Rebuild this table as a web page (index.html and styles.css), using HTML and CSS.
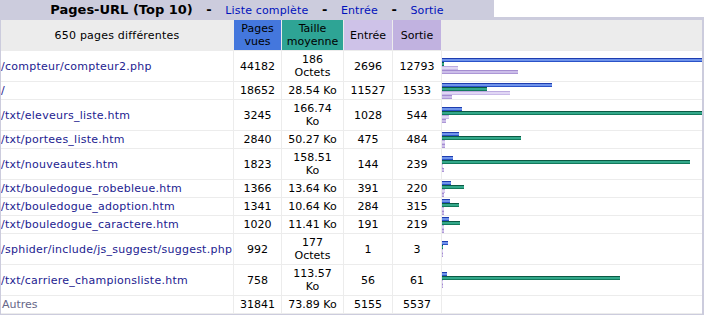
FILE: index.html
```html
<!DOCTYPE html>
<html lang="fr">
<head>
<meta charset="utf-8">
<title>Pages-URL (Top 10)</title>
<link rel="stylesheet" href="styles.css">
</head>
<body>
<div class="panel">
  <div class="titlebar">
    <div class="title">Pages-URL (Top 10) &nbsp; - &nbsp; <a href="#">Liste complète</a> &nbsp; - &nbsp; <a href="#">Entrée</a> &nbsp; - &nbsp; <a href="#">Sortie</a></div>
    <div class="blank"></div>
  </div>
  <div class="frame">
    <table class="data">
      <colgroup>
        <col class="c-url"><col class="c-pages"><col class="c-size"><col class="c-entry"><col class="c-exit"><col class="c-bar">
      </colgroup>
      <tr class="head">
        <th class="h-url">650 pages différentes</th>
        <th class="h-pages">Pages<br>vues</th>
        <th class="h-size">Taille<br>moyenne</th>
        <th class="h-entry">Entrée</th>
        <th class="h-exit">Sortie</th>
        <th class="h-bar"></th>
      </tr>
      <tr>
        <td class="url"><a href="#">/compteur/compteur2.php</a></td>
        <td>44182</td><td>186<br>Octets</td><td>2696</td><td>12793</td>
        <td class="bars"><span class="bar bp" style="width:260px"></span><span class="bar bk" style="width:2px"></span><span class="bar be" style="width:16px"></span><span class="bar bx" style="width:76px"></span></td>
      </tr>
      <tr>
        <td class="url"><a href="#">/</a></td>
        <td>18652</td><td>28.54 Ko</td><td>11527</td><td>1533</td>
        <td class="bars"><span class="bar bp" style="width:110px"></span><span class="bar bk" style="width:45px"></span><span class="bar be" style="width:68px"></span><span class="bar bx" style="width:10px"></span></td>
      </tr>
      <tr>
        <td class="url"><a href="#">/txt/eleveurs_liste.htm</a></td>
        <td>3245</td><td>166.74<br>Ko</td><td>1028</td><td>544</td>
        <td class="bars"><span class="bar bp" style="width:20px"></span><span class="bar bk" style="width:260px"></span><span class="bar be" style="width:7px"></span><span class="bar bx" style="width:4px"></span></td>
      </tr>
      <tr>
        <td class="url"><a href="#">/txt/portees_liste.htm</a></td>
        <td>2840</td><td>50.27 Ko</td><td>475</td><td>484</td>
        <td class="bars"><span class="bar bp" style="width:17px"></span><span class="bar bk" style="width:79px"></span><span class="bar be" style="width:3px"></span><span class="bar bx" style="width:3px"></span></td>
      </tr>
      <tr>
        <td class="url"><a href="#">/txt/nouveautes.htm</a></td>
        <td>1823</td><td>158.51<br>Ko</td><td>144</td><td>239</td>
        <td class="bars"><span class="bar bp" style="width:11px"></span><span class="bar bk" style="width:248px"></span><span class="bar be" style="width:1px"></span><span class="bar bx" style="width:2px"></span></td>
      </tr>
      <tr>
        <td class="url"><a href="#">/txt/bouledogue_robebleue.htm</a></td>
        <td>1366</td><td>13.64 Ko</td><td>391</td><td>220</td>
        <td class="bars"><span class="bar bp" style="width:9px"></span><span class="bar bk" style="width:22px"></span><span class="bar be" style="width:3px"></span><span class="bar bx" style="width:2px"></span></td>
      </tr>
      <tr>
        <td class="url"><a href="#">/txt/bouledogue_adoption.htm</a></td>
        <td>1341</td><td>10.64 Ko</td><td>284</td><td>315</td>
        <td class="bars"><span class="bar bp" style="width:8px"></span><span class="bar bk" style="width:17px"></span><span class="bar be" style="width:2px"></span><span class="bar bx" style="width:2px"></span></td>
      </tr>
      <tr>
        <td class="url"><a href="#">/txt/bouledogue_caractere.htm</a></td>
        <td>1020</td><td>11.41 Ko</td><td>191</td><td>219</td>
        <td class="bars"><span class="bar bp" style="width:7px"></span><span class="bar bk" style="width:18px"></span><span class="bar be" style="width:2px"></span><span class="bar bx" style="width:2px"></span></td>
      </tr>
      <tr>
        <td class="url"><a href="#">/sphider/include/js_suggest/suggest.php</a></td>
        <td>992</td><td>177<br>Octets</td><td>1</td><td>3</td>
        <td class="bars"><span class="bar bp" style="width:6px"></span><span class="bar bk" style="width:1px"></span><span class="bar be" style="width:1px"></span><span class="bar bx" style="width:1px"></span></td>
      </tr>
      <tr>
        <td class="url"><a href="#">/txt/carriere_championsliste.htm</a></td>
        <td>758</td><td>113.57<br>Ko</td><td>56</td><td>61</td>
        <td class="bars"><span class="bar bp" style="width:5px"></span><span class="bar bk" style="width:178px"></span><span class="bar be" style="width:1px"></span><span class="bar bx" style="width:1px"></span></td>
      </tr>
      <tr>
        <td class="url other">Autres</td>
        <td>31841</td><td>73.89 Ko</td><td>5155</td><td>5537</td>
        <td class="bars"></td>
      </tr>
    </table>
  </div>
</div>
</body>
</html>
```
FILE: styles.css
```css
html, body {
  margin: 0;
  padding: 0;
  background: #ffffff;
}

body {
  font-family: "DejaVu Sans", Verdana, sans-serif;
  font-size: 11px;
  color: #000000;
}

.panel {
  width: 705px;
}

.titlebar {
  display: flex;
  height: 17px;
}

.title {
  width: 494px;
  background: #ccccdd;
  text-align: center;
  font-weight: bold;
  font-size: 13px;
  line-height: 16px;
  padding-top: 2px;
  white-space: nowrap;
  box-sizing: border-box;
}

.title a {
  font-weight: normal;
  font-size: 11px;
  letter-spacing: 0.15px;
  color: #0011bb;
  text-decoration: none;
}

.blank {
  flex: 1;
  background: #ffffff;
}

.frame {
  width: 704px;
  box-sizing: border-box;
  background: #ccccdd;
  padding: 3px 2px 4px 1px;
}

table.data {
  width: 701px;
  table-layout: fixed;
  border-collapse: separate;
  border-spacing: 0;
  background: #ffffff;
}

.c-url { width: 233px; }
.c-pages { width: 48px; }
.c-size { width: 62px; }
.c-entry { width: 49px; }
.c-exit { width: 49px; }
.c-bar { width: 260px; }

th, td {
  font-family: "DejaVu Sans", Verdana, sans-serif;
  font-size: 11px;
  font-weight: normal;
  line-height: 13px;
  padding: 2px;
  text-align: center;
  vertical-align: middle;
  border-right: 1px solid #ececec;
  border-bottom: 1px solid #ececec;
  white-space: nowrap;
  overflow: hidden;
}

tr.head th {
  background: #ececec;
}

tr.head th.h-url { letter-spacing: 0.2px; }
tr.head th.h-pages { background: #4477dd; }
tr.head th.h-size { background: #2ea495; }
tr.head th.h-entry { background: #cec2e8; }
tr.head th.h-exit { background: #c1b2e0; }

td.url {
  text-align: left;
  padding-left: 0;
}

td.url a {
  color: #1c2290;
  text-decoration: none;
  letter-spacing: 0.25px;
}

td.other {
  color: #666688;
  padding-left: 1px;
}

.h-bar, td.bars {
  border-right: none;
  padding: 0;
  text-align: left;
}

.bar {
  display: block;
  height: 4px;
}

.bp { background: linear-gradient(#1e3db0 0 1px, #6f93ea 1px 3px, #2a52c8 3px 4px); }
.bk { background: linear-gradient(#0b5a44 0 1px, #33a88a 1px 3px, #137a5c 3px 4px); }
.be { background: linear-gradient(#bcaae0 0 1px, #e0d6f4 1px 3px, #c9b9e8 3px 4px); }
.bx { background: linear-gradient(#a48cd0 0 1px, #cbbde9 1px 3px, #ad97d6 3px 4px); }
```
